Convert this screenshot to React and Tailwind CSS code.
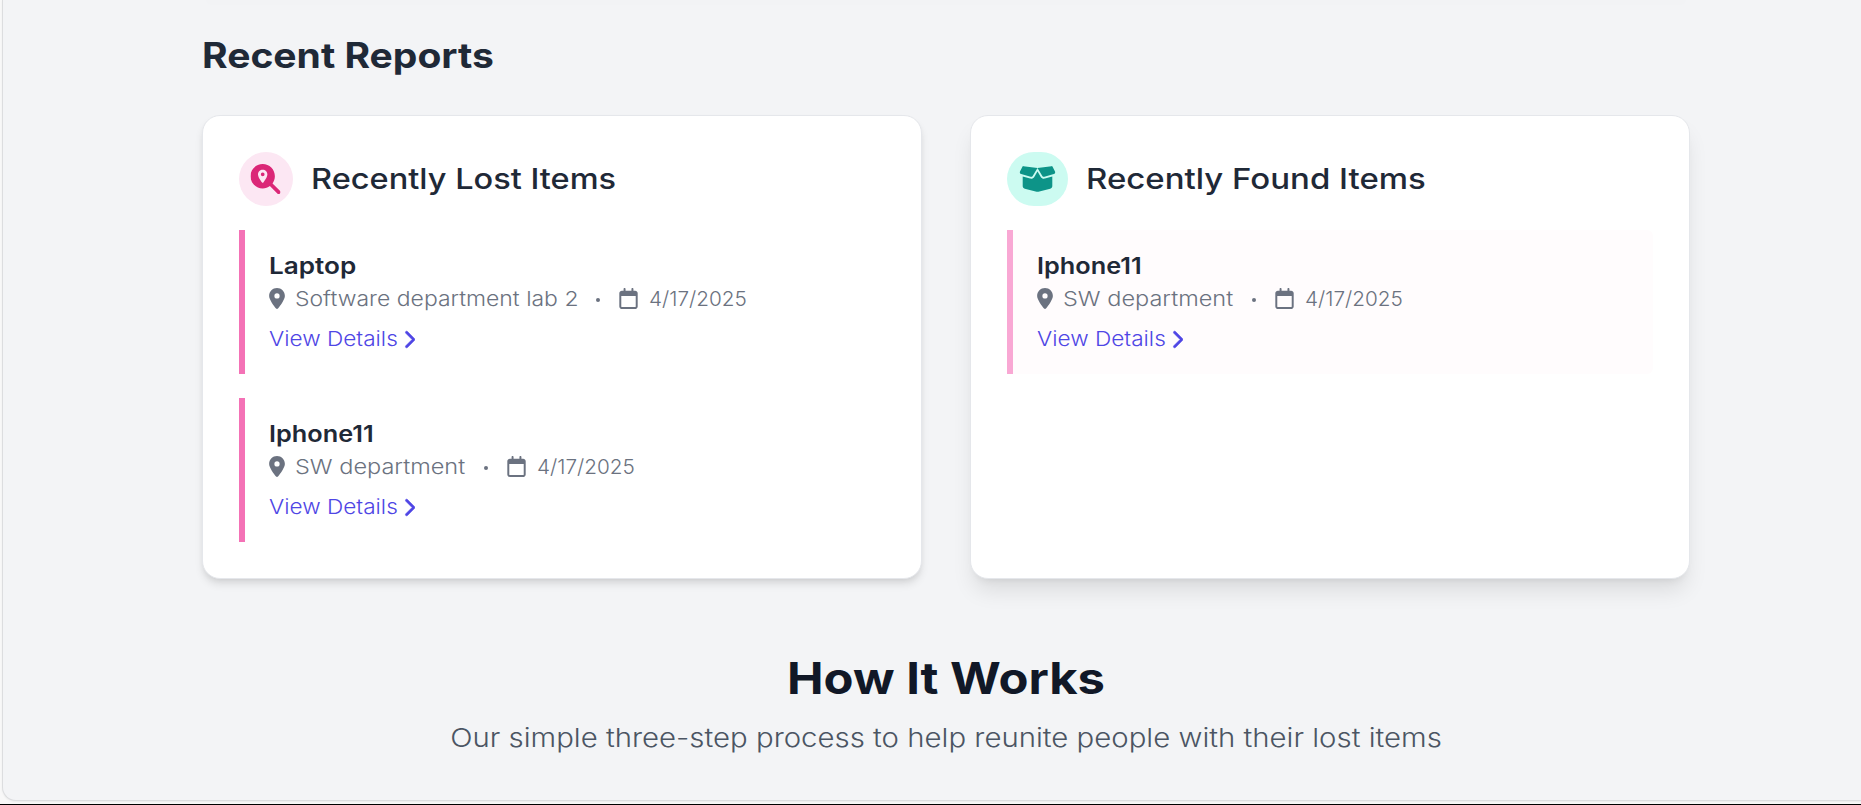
import {
  FaBoxOpen,
  FaChevronRight,
  FaLocationDot,
  FaMagnifyingGlassLocation,
  FaRegCalendar,
} from "react-icons/fa6";

function ReportItem({ title, titleClass, place, placeClass, date, className }) {
  return (
    <article className={`border-l-[6px] pt-[18px] pb-5 pl-[23.5px] ${className}`}>
      <h4 className={`h-9 origin-left text-[23px] leading-9 font-semibold text-[#1f2937] ${titleClass}`}>{title}</h4>
      <div className="flex h-[30px] items-center text-[20.3px] leading-[30px] font-light whitespace-nowrap text-[#6b7280]">
        <FaLocationDot className="h-[21px] w-4 shrink-0 -translate-y-px" />
        <span className={`ml-[10.5px] shrink-0 origin-left ${placeClass}`}>{place}</span>
        <span className="mr-[19px] ml-[18px] h-1 w-1 shrink-0 translate-y-px rounded-full bg-[#6b7280]" />
        <FaRegCalendar className="h-[21px] w-[19px] shrink-0 -translate-y-px" />
        <span className="ml-[11px] origin-left scale-x-[1.022]">{date}</span>
      </div>
      <a href="#" className="mt-[10px] flex h-[30px] items-center text-[20.3px] leading-[30px] font-light text-[#4f46e5]">
        <span className="w-[134.5px] shrink-0 origin-left scale-x-[1.114] whitespace-nowrap">View Details</span>
        <FaChevronRight className="h-[19px] w-3 shrink-0 stroke-[#4f46e5] stroke-[16px]" />
      </a>
    </article>
  );
}

function ReportCard({ icon, iconClass, title, titleClass, className, children }) {
  return (
    <section className={`flex-1 rounded-[18px] border border-[#e5e7eb] bg-white p-9 ${className}`}>
      <div className="mb-6 flex items-center gap-[18px]">
        <div className={`flex h-[54px] items-center justify-center rounded-full ${iconClass}`}>{icon}</div>
        <h3 className={`origin-left text-[29px] leading-[42px] font-medium whitespace-nowrap text-[#1f2937] ${titleClass}`}>
          {title}
        </h3>
      </div>
      <div className="flex flex-col gap-6">{children}</div>
    </section>
  );
}

export default function App() {
  return (
    <div className="h-[805px] overflow-hidden border-b border-black bg-[#f8f8f8] pl-[2px] font-['Inter',sans-serif]">
      <div className="h-[801px] rounded-bl-[14px] border-b border-l border-[#dcdddf] bg-[#f3f4f6] shadow-[0_1px_2px_rgba(0,0,0,0.06)]">
        <div className="ml-[199px] w-[1488px]">
          <div className="h-7">
            <div className="mx-1 h-[5px] rounded-b-full bg-[#f2f3f5]" />
          </div>
          <h2 className="mb-[33px] origin-left scale-x-[1.115] text-[35px] leading-[54px] font-bold text-[#1f2937]">
            Recent Reports
          </h2>
          <div className="flex h-[464px] gap-12">
            <ReportCard
              title="Recently Lost Items"
              titleClass="scale-x-[1.122]"
              icon={<FaMagnifyingGlassLocation className="h-[30px] w-[30px] -translate-x-[0.5px] text-[#db2777]" />}
              iconClass="w-[54px] bg-[#fce7f3]"
              className="shadow-[0_6px_9px_-1.5px_rgba(0,0,0,0.1),0_3px_6px_-3px_rgba(0,0,0,0.1)]"
            >
              <ReportItem
                title="Laptop"
                titleClass="scale-x-[1.135]"
                place="Software department lab 2"
                placeClass="w-[283px] scale-x-[1.132]"
                date="4/17/2025"
                className="border-[#f472b6]"
              />
              <ReportItem
                title="Iphone11"
                titleClass="scale-x-[1.1]"
                place="SW department"
                placeClass="w-[171px] scale-x-[1.16]"
                date="4/17/2025"
                className="border-[#f472b6]"
              />
            </ReportCard>
            <ReportCard
              title="Recently Found Items"
              titleClass="scale-x-[1.137]"
              icon={<FaBoxOpen className="h-[30px] w-[37px] text-[#0d9488]" />}
              iconClass="w-[61px] bg-[#ccfbf1]"
              className="shadow-[0_15px_22.5px_-4.5px_rgba(0,0,0,0.1),0_6px_9px_-6px_rgba(0,0,0,0.1)]"
            >
              <ReportItem
                title="Iphone11"
                titleClass="scale-x-[1.1]"
                place="SW department"
                placeClass="w-[171px] scale-x-[1.16]"
                date="4/17/2025"
                className="rounded-r-[6px] border-[#f9a8d4] bg-[#fffcfd]"
              />
            </ReportCard>
          </div>
          <div className="pt-[72px] text-center">
            <h2 className="scale-x-[1.125] text-[43.5px] leading-[54px] font-bold text-[#111827]">How It Works</h2>
            <p className="mt-3 scale-x-[1.129] text-[26px] leading-[42px] font-light text-[#4b5563]">
              Our simple three-step process to help reunite people with their lost items
            </p>
          </div>
        </div>
      </div>
    </div>
  );
}
